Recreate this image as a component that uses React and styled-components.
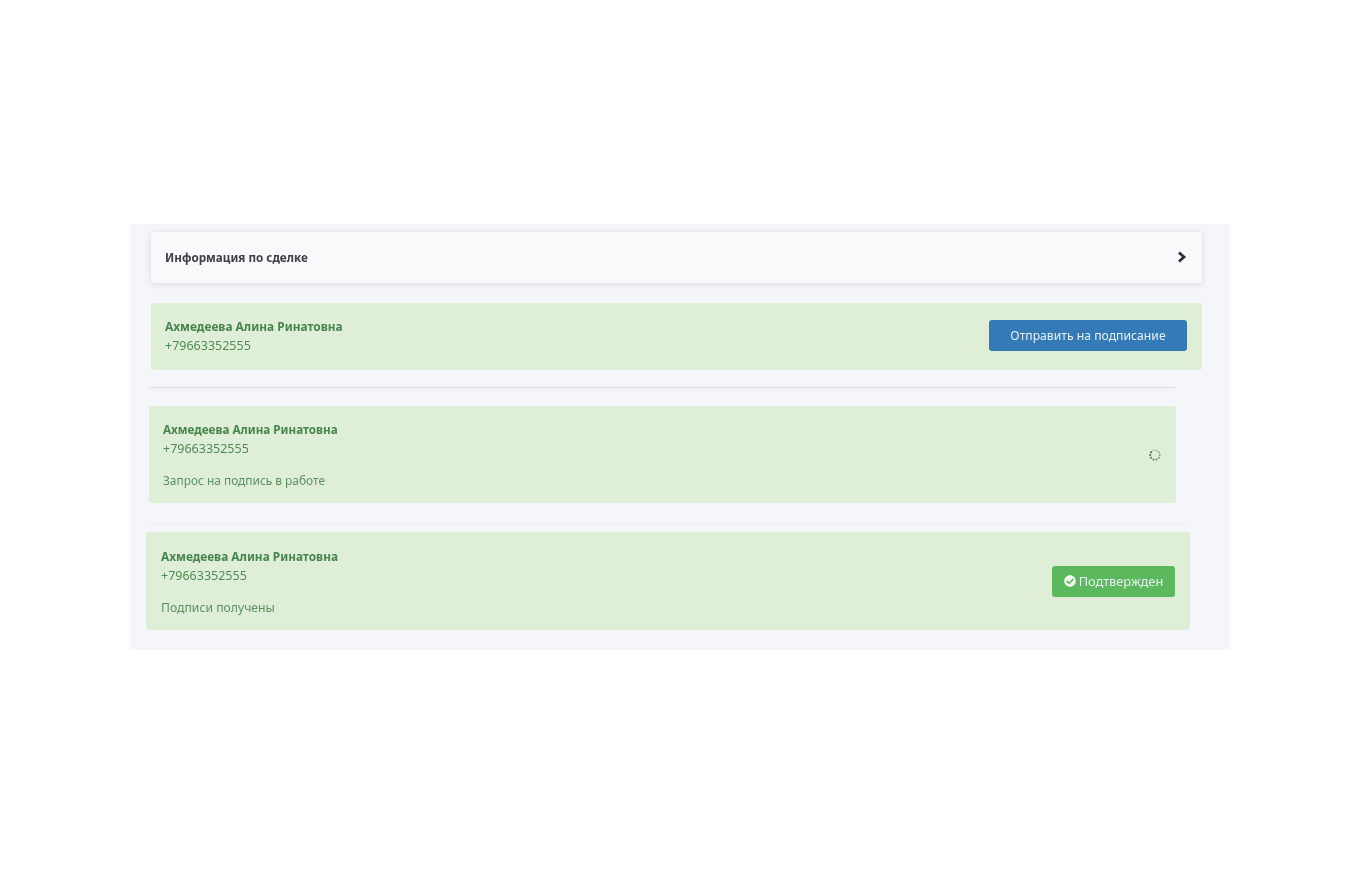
import styled, { createGlobalStyle } from "styled-components";
import { FaCheckCircle } from "react-icons/fa";

const GlobalStyle = createGlobalStyle`
  html, body {
    margin: 0;
    padding: 0;
    background: #fff;
    font-family: "Noto Sans", "Open Sans", sans-serif;
  }
`;

const Page = styled.div`
  width: 1100px;
  min-height: 880px;
  margin: 0 auto;
  padding-top: 224px;
  box-sizing: border-box;
`;

const Panel = styled.div`
  height: 426px;
  background: #f4f6f9;
  padding-top: 8px;
  box-sizing: border-box;
  display: flex;
  flex-direction: column;
  filter: blur(0.35px);
`;

const DealCard = styled.div`
  height: 51px;
  margin: 0 28px 20px 21px;
  padding: 0 15px 2px 14px;
  box-sizing: border-box;
  display: flex;
  align-items: center;
  justify-content: space-between;
  background: #f8f9fb;
  border-radius: 3px;
  box-shadow: 0 1px 6px rgba(60, 70, 90, 0.16);
  color: #3c3f45;
  font-size: 11.7px;
  font-weight: 700;
`;

const Chevron = styled.svg`
  width: 10px;
  height: 12px;
  display: block;
`;

const Alert = styled.div`
  height: ${(p) => p.$height}px;
  margin-left: ${(p) => p.$left}px;
  margin-right: ${(p) => p.$right}px;
  padding: ${(p) => p.$padTop || 0}px 15px ${(p) => p.$padBottom || 0}px ${(p) => p.$padLeft}px;
  box-sizing: border-box;
  display: flex;
  align-items: center;
  justify-content: space-between;
  background: #dfefd7;
  border-radius: 3px;
  color: #4f8c55;
  font-size: 12.5px;
`;

const Info = styled.div`
  display: flex;
  flex-direction: column;
`;

const Name = styled.div`
  font-size: ${(p) => p.$size}px;
  font-weight: 700;
  line-height: 19px;
  color: #46854d;
`;

const Phone = styled.div`
  line-height: 19px;
`;

const Status = styled.div`
  margin-top: 13px;
  font-size: ${(p) => p.$size}px;
  line-height: 19px;
  color: #5a915f;
`;

const Divider = styled.div`
  height: 1px;
  margin-left: ${(p) => p.$left}px;
  margin-right: ${(p) => p.$right}px;
  margin-top: ${(p) => p.$top}px;
  margin-bottom: ${(p) => p.$bottom}px;
  background: ${(p) => p.$color};
  box-shadow: 0 1px 4px rgba(60, 70, 90, ${(p) => p.$shadow});
`;

const Button = styled.div`
  height: 31px;
  width: ${(p) => p.$width}px;
  margin-top: ${(p) => p.$top || 0}px;
  display: flex;
  align-items: center;
  justify-content: center;
  gap: 3px;
  box-sizing: border-box;
  border-radius: 3px;
  background: ${(p) => p.$bg};
  color: #e6f0f2;
  font-size: ${(p) => p.$size}px;
`;

const SpinnerWrap = styled.svg`
  width: 14px;
  height: 14px;
  margin-right: -1px;
  display: block;
`;

function Spinner() {
  const dots = Array.from({ length: 10 }, (_, i) => {
    const a = (i / 10) * Math.PI * 2;
    return {
      x: 7 + 4.8 * Math.cos(a),
      y: 7 + 4.8 * Math.sin(a),
      o: 0.3 + 0.7 * (((i + 3) % 10) / 9),
    };
  });
  return (
    <SpinnerWrap viewBox="0 0 14 14">
      {dots.map((d, i) => (
        <circle key={i} cx={d.x} cy={d.y} r="1" fill="#3f5643" opacity={d.o} />
      ))}
    </SpinnerWrap>
  );
}

function Person({ nameSize = 11.9, status, statusSize = 11.9 }) {
  return (
    <Info>
      <Name $size={nameSize}>Ахмедеева Алина Ринатовна</Name>
      <Phone>+79663352555</Phone>
      {status && <Status $size={statusSize}>{status}</Status>}
    </Info>
  );
}

export default function App() {
  return (
    <>
      <GlobalStyle />
      <Page>
        <Panel>
          <DealCard>
            Информация по сделке
            <Chevron viewBox="0 0 10 12">
              <path d="M2 1.5 L7 6 L2 10.5" fill="none" stroke="#2f3338" strokeWidth="2.8" />
            </Chevron>
          </DealCard>

          <Alert $height={67} $left={21} $right={28} $padLeft={14} $padBottom={2}>
            <Person />
            <Button $width={198} $bg="#337ab7" $size={12.2}>Отправить на подписание</Button>
          </Alert>

          <Divider $left={18} $right={54} $top={17} $bottom={18} $color="#dfe2e6" $shadow={0.1} />

          <Alert $height={97} $left={19} $right={54} $padLeft={14}>
            <Person nameSize={11.7} status="Запрос на подпись в работе" />
            <Spinner />
          </Alert>

          <Divider $left={19} $right={40} $top={20} $bottom={8} $color="#eef0f3" $shadow={0} />

          <Alert $height={98} $left={16} $right={40} $padLeft={15} $padTop={2}>
            <Person nameSize={11.85} status="Подписи получены" statusSize={12.2} />
            <Button $width={123} $top={-2} $bg="#5cb85c" $size={12.8}>
              <FaCheckCircle size={12} color="#f2f8f0" />
              Подтвержден
            </Button>
          </Alert>
        </Panel>
      </Page>
    </>
  );
}
